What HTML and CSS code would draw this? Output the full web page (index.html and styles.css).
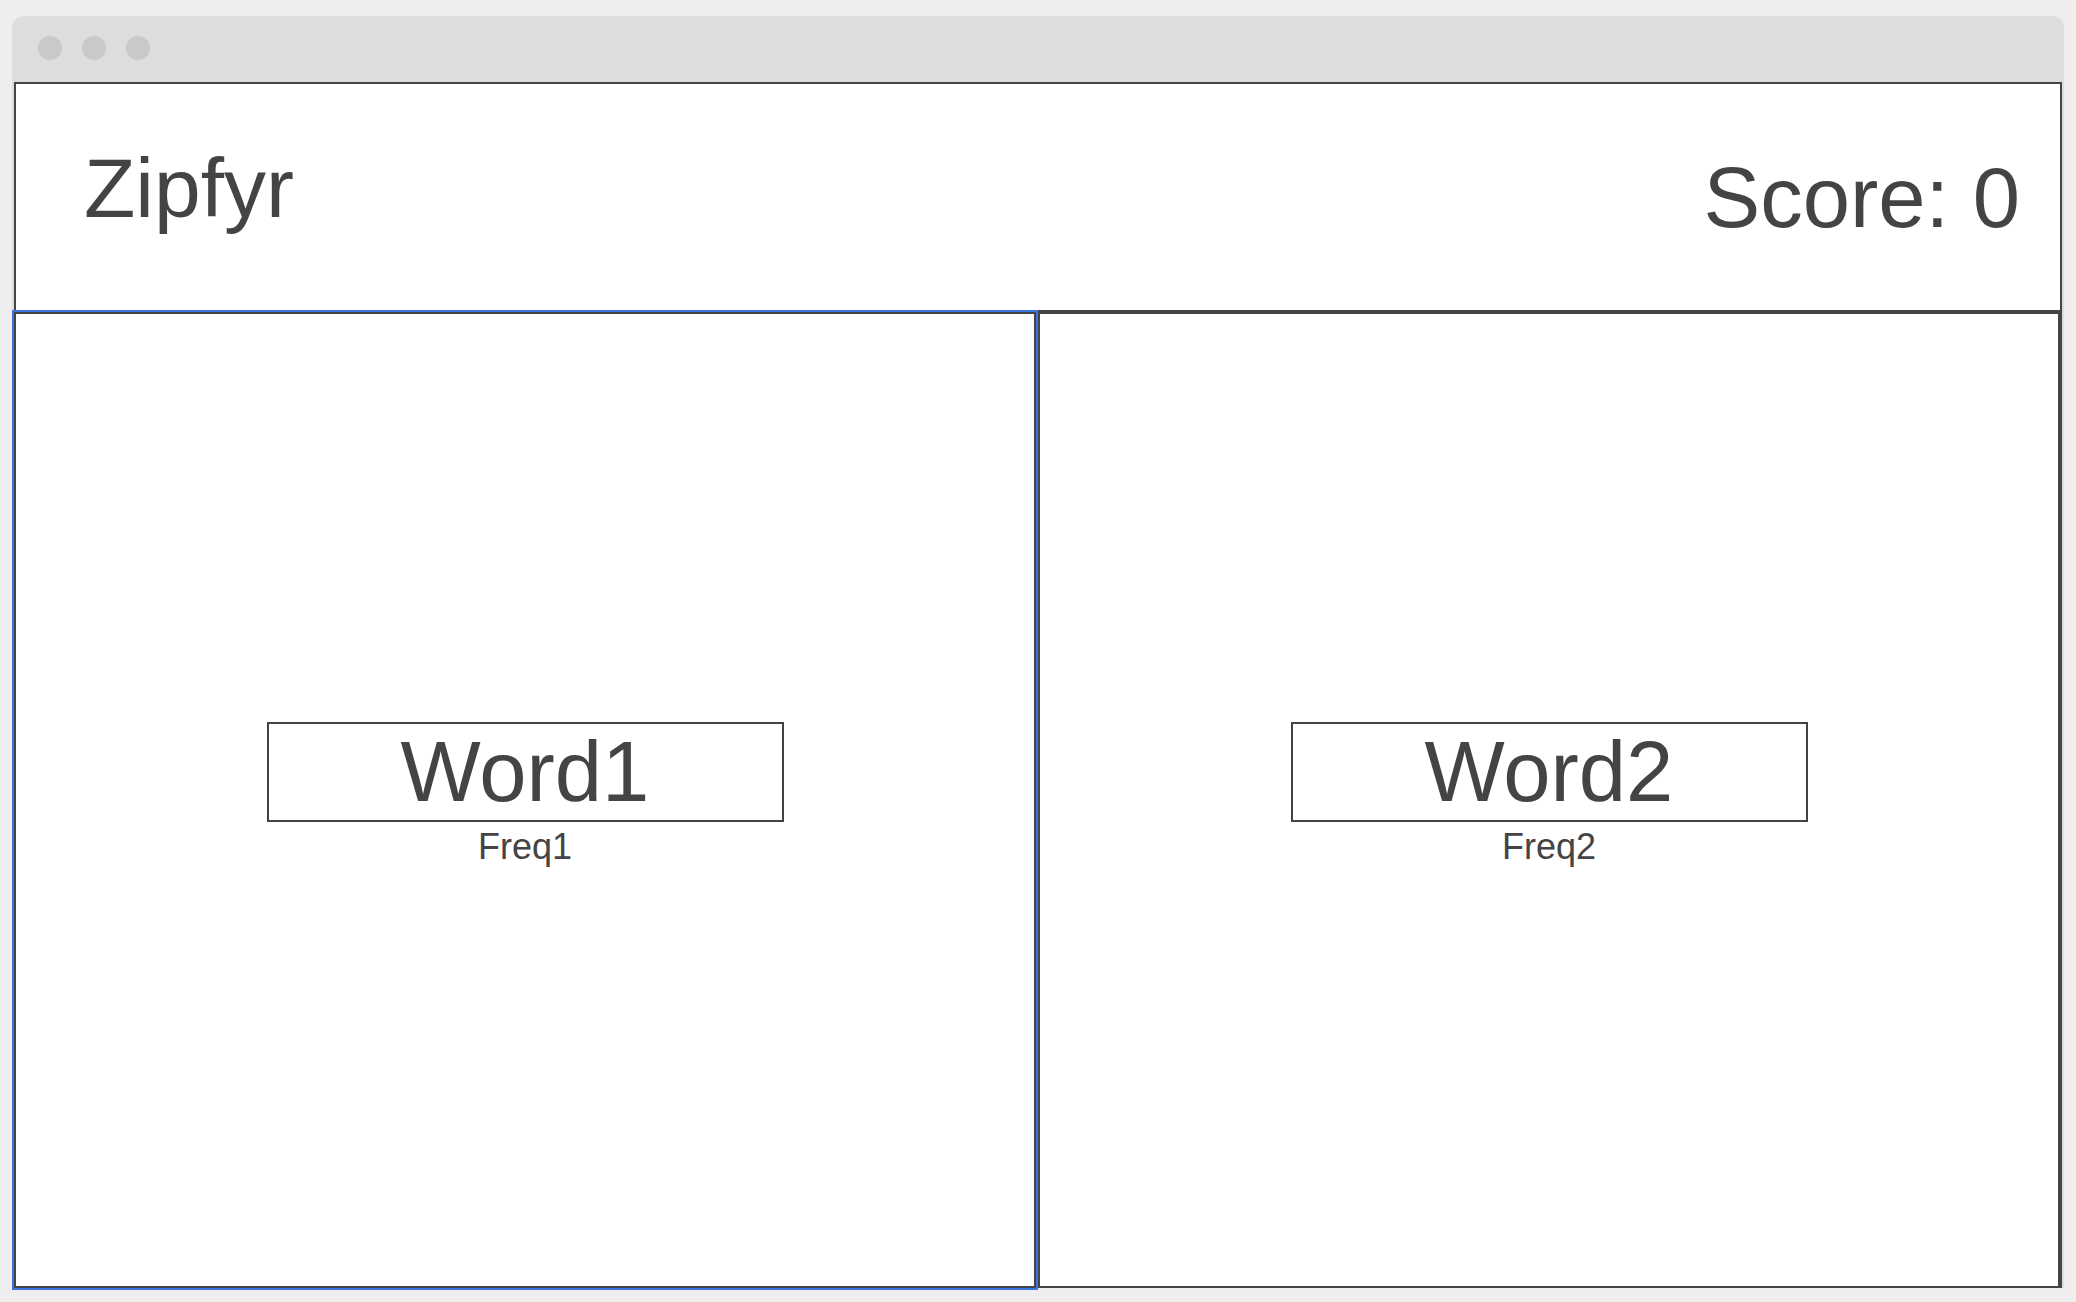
FILE: index.html
```html
<!DOCTYPE html>
<html lang="en">
<head>
<meta charset="utf-8">
<title>Zipfyr</title>
<link rel="stylesheet" href="styles.css">
</head>
<body>
<div class="window">
  <div class="titlebar">
    <span class="dot"></span>
    <span class="dot"></span>
    <span class="dot"></span>
  </div>
  <div class="app">
    <header class="header">
      <div class="logo">Zipfyr</div>
      <div class="score">Score: 0</div>
    </header>
    <main class="panels">
      <section class="panel panel-selected">
        <div class="word-group">
          <div class="word-box">Word1</div>
          <div class="freq">Freq1</div>
        </div>
      </section>
      <section class="panel">
        <div class="word-group">
          <div class="word-box">Word2</div>
          <div class="freq">Freq2</div>
        </div>
      </section>
    </main>
  </div>
</div>
</body>
</html>
```

FILE: styles.css
```css
* {
  box-sizing: border-box;
}

html, body {
  margin: 0;
  padding: 0;
  background: #eeeeee;
  font-family: "Liberation Sans", Arial, sans-serif;
  color: #444444;
}

body {
  width: 2076px;
  height: 1302px;
  overflow: hidden;
}

.window {
  margin: 16px 0 0 12px;
  width: 2052px;
  background: #dddddd;
  border-radius: 12px 12px 0 0;
}

.titlebar {
  height: 66px;
  display: flex;
  gap: 20px;
  padding: 20px 0 0 26px;
}

.dot {
  width: 24px;
  height: 24px;
  border-radius: 50%;
  background: #c9c9c9;
}

.app {
  margin: 0 2px;
  background: #ffffff;
  border-right: 2px solid #444444;
  display: flex;
  flex-direction: column;
}

.header {
  height: 230px;
  border-top: 2px solid #444444;
  border-left: 2px solid #444444;
  border-bottom: 2px solid #444444;
  display: flex;
  justify-content: space-between;
  align-items: flex-start;
  padding: 0 40px 0 68px;
}

.logo {
  font-size: 84px;
  line-height: 1;
  margin-top: 62px;
}

.score {
  font-size: 85px;
  line-height: 1;
  margin-top: 71px;
}

.panels {
  display: flex;
  gap: 2px;
  height: 976px;
}

.panel {
  flex: 1;
  border: 2px solid #444444;
  background: #ffffff;
  display: flex;
  align-items: center;
  justify-content: center;
  padding-bottom: 11px;
}

.panel-selected {
  outline: 2px solid #3b74e0;
}

.word-group {
  display: flex;
  flex-direction: column;
  align-items: center;
}

.word-box {
  width: 517px;
  height: 100px;
  border: 2px solid #444444;
  font-size: 85px;
  line-height: 96px;
  text-align: center;
}

.freq {
  margin-top: 4px;
  font-size: 36px;
  line-height: 1.15;
}
```
